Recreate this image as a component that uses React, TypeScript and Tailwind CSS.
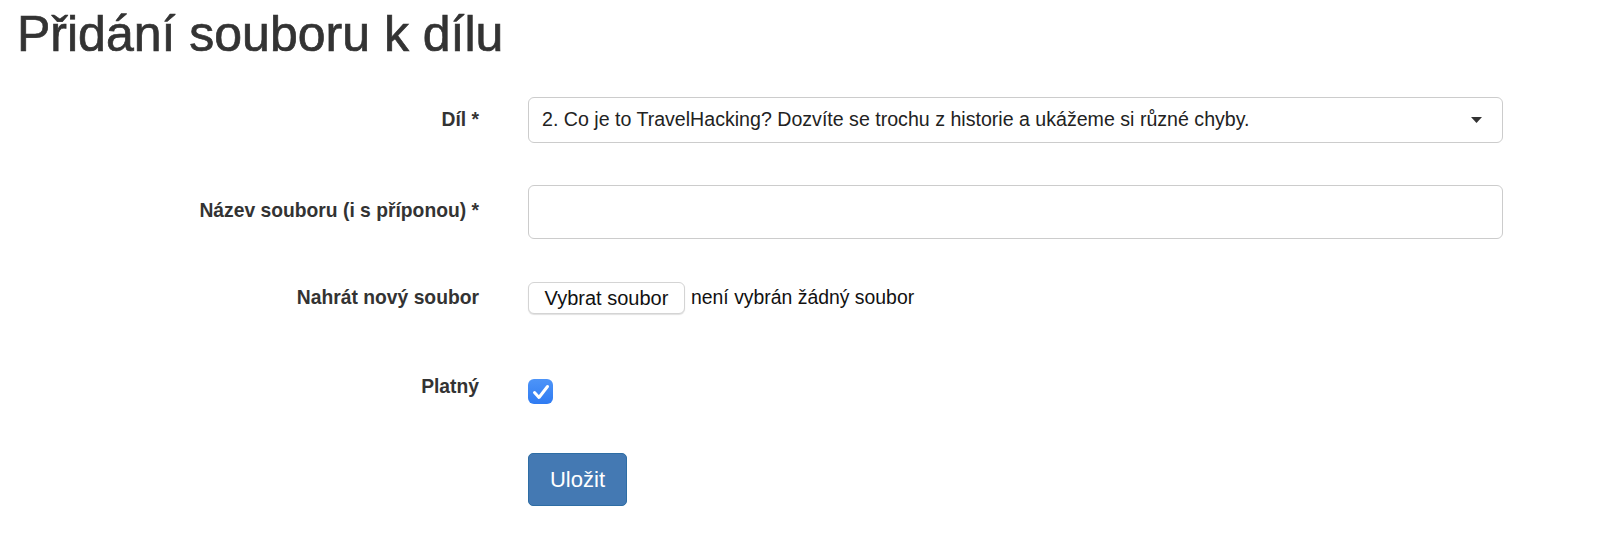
const labelCls = "w-[479px] shrink-0 text-right text-[19.3px] font-bold leading-6";

const App = () => {
  return (
    <main className="min-h-screen bg-white font-['Liberation_Sans',Arial,sans-serif] text-[#333]">
      <h1 className="pl-[17px] pt-[7px] text-[50px] font-normal leading-[1.1] [-webkit-text-stroke:0.7px_#333]">
        Přidání souboru k dílu
      </h1>

      <form onSubmit={(e) => e.preventDefault()}>
        {/* Díl */}
        <div className="mt-[35px] flex h-[46px] items-center">
          <label className={labelCls}>Díl *</label>
          <div className="ml-[49px] flex h-full w-[975px] items-center justify-between rounded-[6px] border border-[#cccccc] bg-white pl-[13px] pr-[20px]">
            <span className="text-[19.6px] text-[#222]">
              2. Co je to TravelHacking? Dozvíte se trochu z historie a ukážeme si různé chyby.
            </span>
            <svg width="11" height="6" viewBox="0 0 11 6">
              <path d="M0 0 L11 0 L5.5 6 Z" fill="#333" />
            </svg>
          </div>
        </div>

        {/* Název souboru */}
        <div className="mt-[42px] flex h-[54px] items-center">
          <label className={labelCls + " pb-[3px]"}>Název souboru (i s příponou) *</label>
          <input
            type="text"
            className="ml-[49px] h-full w-[975px] rounded-[6px] border border-[#cccccc] bg-white px-[13px] text-[19px] outline-none"
          />
        </div>

        {/* Nahrát nový soubor */}
        <div className="mt-[43px] flex h-[32px] items-center">
          <label className={labelCls}>Nahrát nový soubor</label>
          <div className="ml-[49px] flex items-center">
            <button
              type="button"
              className="h-[32px] w-[157px] rounded-[6px] border border-[#d4d4d4] bg-white text-[20px] text-[#111] shadow-[0_1px_1px_rgba(0,0,0,0.12)]"
            >
              Vybrat soubor
            </button>
            <span className="ml-[6px] text-[19.4px] text-[#111]">není vybrán žádný soubor</span>
          </div>
        </div>

        {/* Platný */}
        <div className="mt-[61px] flex items-start">
          <label className={labelCls}>Platný</label>
          <div className="ml-[49px] mt-[4px] flex h-[25px] w-[25px] items-center justify-center rounded-[6px] bg-gradient-to-b from-[#4d94f8] to-[#2f7bf2]">
            <svg width="18" height="16" viewBox="0 0 18 16">
              <path
                d="M2.5 8.5 L7 13.5 L15.5 2.5"
                fill="none"
                stroke="white"
                strokeWidth="3"
                strokeLinecap="round"
                strokeLinejoin="round"
              />
            </svg>
          </div>
        </div>

        {/* Uložit */}
        <div className="mt-[49px] flex">
          <div className="w-[479px] shrink-0" />
          <button
            type="submit"
            className="ml-[49px] h-[53px] w-[99px] rounded-[5px] border border-[#2e6da4] bg-[#4479b3] text-[22px] text-white"
          >
            Uložit
          </button>
        </div>
      </form>
    </main>
  );
};

export default App;
